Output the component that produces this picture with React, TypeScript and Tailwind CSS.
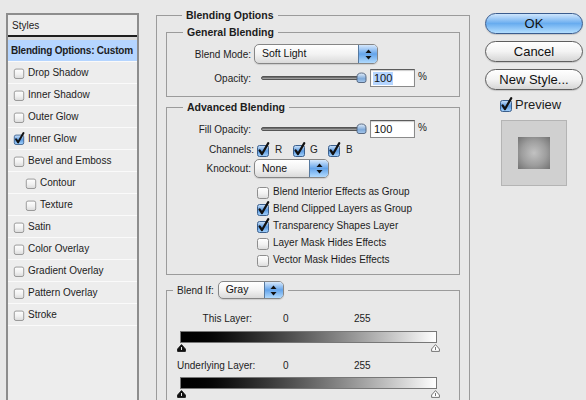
import React, { useId } from "react";

type CheckProps = { checked?: boolean; small?: boolean };

// Aqua-style checkbox; the tick pokes out over the top edge like the real thing
const AquaCheck: React.FC<CheckProps> = ({ checked = false, small = false }) => {
  const id = useId();
  const s = small ? 12 : 14;
  return (
    <svg width={s} height={s + 1} viewBox="0 0 14 15" className="block shrink-0">
      <defs>
        <linearGradient id={`${id}off`} x1="0" y1="0" x2="0" y2="1">
          <stop offset="0" stopColor="#ffffff" />
          <stop offset="0.55" stopColor="#f1f1f1" />
          <stop offset="1" stopColor="#dadada" />
        </linearGradient>
        <linearGradient id={`${id}on`} x1="0" y1="0" x2="0" y2="1">
          <stop offset="0" stopColor="#cfe4fa" />
          <stop offset="0.5" stopColor="#5c9be2" />
          <stop offset="1" stopColor="#a6d3fc" />
        </linearGradient>
      </defs>
      <rect
        x="1.5"
        y="3.5"
        width="11"
        height="11"
        rx="2"
        fill={checked ? `url(#${id}on)` : `url(#${id}off)`}
        stroke={checked ? "#3b5f8c" : "#8e8e8e"}
      />
      {checked && (
        <path
          d="M3.6 8.4 L6 12 L12.2 1.2"
          fill="none"
          stroke="#111"
          strokeWidth="2.3"
          strokeLinecap="round"
          strokeLinejoin="round"
        />
      )}
    </svg>
  );
};

const UpDown = () => (
  <svg width="7" height="11" viewBox="0 0 7 11">
    <path d="M3.5 0.5 L6.5 4 L0.5 4 Z" fill="#111" />
    <path d="M3.5 10.5 L6.5 7 L0.5 7 Z" fill="#111" />
  </svg>
);

const Popup: React.FC<{ value: string; width: string; height?: string }> = ({
  value,
  width,
  height = "h-[20px]",
}) => (
  <div
    className={`flex ${width} ${height} overflow-hidden rounded-[5px] border border-[#868686] bg-gradient-to-b from-white via-[#f3f3f3] to-[#dadada] shadow-[0_1px_1px_rgba(0,0,0,0.12)]`}
  >
    <div className="flex flex-1 items-center pl-[7px] text-[10.5px] text-[#111]">{value}</div>
    <div className="flex w-[19px] items-center justify-center border-l border-[#56799f] bg-gradient-to-b from-[#d6e8fb] via-[#64a4ea] to-[#b1dafd]">
      <UpDown />
    </div>
  </div>
);

// Horizontal slider pinned at its maximum
const Slider = () => {
  const id = useId();
  return (
    <div className="relative flex h-[14px] w-[107px] items-center">
      <div className="h-[4px] w-[101px] rounded-full border border-[#555] bg-gradient-to-b from-[#5a5a5a] to-[#b4b4b4]" />
      <svg width="11" height="12" viewBox="0 0 11 12" className="absolute right-[1px] top-[1px]">
        <defs>
          <linearGradient id={`${id}t`} x1="0" y1="0" x2="0" y2="1">
            <stop offset="0" stopColor="#e3eefa" />
            <stop offset="0.6" stopColor="#7ea9d9" />
            <stop offset="1" stopColor="#a9c9ec" />
          </linearGradient>
        </defs>
        <path
          d="M1 5 Q1 1 5.5 1 Q10 1 10 5 L10 8.5 Q10 10.5 8 10.5 L3 10.5 Q1 10.5 1 8.5 Z"
          fill={`url(#${id}t)`}
          stroke="#4d5f78"
          strokeWidth="0.9"
        />
      </svg>
    </div>
  );
};

const NumberBox: React.FC<{ selected?: boolean }> = ({ selected = false }) => (
  <div className="flex h-[18px] w-[45px] items-center border border-[#8a8a8a] border-t-[#5c5c5c] bg-white pl-[2px] shadow-[inset_0_1px_1px_rgba(0,0,0,0.2)]">
    <span className={`px-[1px] text-[11px] leading-[13px] text-[#111] ${selected ? "bg-[#b5d5ff]" : ""}`}>
      100
    </span>
  </div>
);

const Marker: React.FC<{ dark?: boolean }> = ({ dark = false }) => (
  <svg width="9" height="8" viewBox="0 0 9 8" className="block">
    <path
      d="M4.5 0.6 L8.4 5 L8.4 7.4 L0.6 7.4 L0.6 5 Z"
      fill={dark ? "#111" : "#fff"}
      stroke={dark ? "#111" : "#666"}
      strokeWidth="0.9"
      strokeLinejoin="round"
    />
    <path d="M4.5 3 L4.5 6" stroke={dark ? "#fff" : "#666"} strokeWidth="0.9" />
  </svg>
);

const GrayRamp = () => (
  <div className="flex flex-col">
    <div className="h-[12px] w-[257px] border border-[#777] bg-gradient-to-r from-black to-white" />
    <div className="ml-[-3px] mt-[1px] flex w-[263px] justify-between">
      <Marker dark />
      <Marker />
    </div>
  </div>
);

const styleRows: { label: string; checked?: boolean; indent?: boolean }[] = [
  { label: "Drop Shadow" },
  { label: "Inner Shadow" },
  { label: "Outer Glow" },
  { label: "Inner Glow", checked: true },
  { label: "Bevel and Emboss" },
  { label: "Contour", indent: true },
  { label: "Texture", indent: true },
  { label: "Satin" },
  { label: "Color Overlay" },
  { label: "Gradient Overlay" },
  { label: "Pattern Overlay" },
  { label: "Stroke" },
];

const groupOptions: { label: string; checked: boolean }[] = [
  { label: "Blend Interior Effects as Group", checked: false },
  { label: "Blend Clipped Layers as Group", checked: true },
  { label: "Transparency Shapes Layer", checked: true },
  { label: "Layer Mask Hides Effects", checked: false },
  { label: "Vector Mask Hides Effects", checked: false },
];

const AquaButton: React.FC<{ label: string; primary?: boolean }> = ({ label, primary = false }) => (
  <button
    className={`flex h-[21px] w-[98px] items-center justify-center rounded-full border text-[13px] leading-none text-[#111] shadow-[0_1px_1px_rgba(0,0,0,0.15)] ${
      primary
        ? "border-[#3a5c8e] bg-gradient-to-b from-[#cfe6fc] via-[#68acef] to-[#b3defe]"
        : "border-[#5e5e5e] bg-gradient-to-b from-white via-[#f3f3f3] to-[#d6d6d6]"
    }`}
  >
    {label}
  </button>
);

export default function App() {
  return (
    <div className="flex h-[400px] w-[586px] overflow-hidden bg-[#e8e8e8] font-['Liberation_Sans',Arial,sans-serif] text-[10px] text-[#1c1c1c]">
      {/* Styles list */}
      <div className="ml-[6px] mt-[13px] h-[420px] w-[133px] shrink-0 border-2 border-b-0 border-[#8d8d8d] bg-[#ededed]">
        <div className="flex h-[20px] items-center pl-[4px]">Styles</div>
        <div className="h-[2px] bg-[#1e1e1e]" />
        <div className="h-[3px] bg-[#d9d9d9]" />
        <div className="flex h-[22px] items-center whitespace-nowrap border-b border-[#fafafa] bg-[#b5d5ff] pl-[3px] font-bold tracking-[-0.2px]">
          Blending Options: Custom
        </div>
        {styleRows.map((row) => (
          <div
            key={row.label}
            className={`flex h-[22px] items-center gap-[3px] border-b border-[#fafafa] ${
              row.indent ? "pl-[17px]" : "pl-[5px]"
            }`}
          >
            <AquaCheck checked={row.checked} small />
            <span>{row.label}</span>
          </div>
        ))}
      </div>

      {/* Blending options */}
      <fieldset className="ml-[17px] mt-[9px] h-[420px] w-[314px] shrink-0 border border-[#9b9b9b] px-[9px] pt-[5px]">
        <legend className="ml-[16px] px-[4px] text-[10.5px] font-bold leading-[12px]">Blending Options</legend>

        <fieldset className="border border-[#9b9b9b] pb-[9px] pt-[6px]">
          <legend className="ml-[16px] px-[4px] text-[10.5px] font-bold leading-[12px]">General Blending</legend>
          <div className="flex items-center">
            <span className="w-[87px] pr-[3px] text-right">Blend Mode:</span>
            <Popup value="Soft Light" width="w-[124px]" />
          </div>
          <div className="mt-[5px] flex items-center">
            <span className="w-[87px] pr-[3px] text-right">Opacity:</span>
            <div className="ml-[7px]">
              <Slider />
            </div>
            <div className="ml-[2px]">
              <NumberBox selected />
            </div>
            <span className="ml-[3px] self-start">%</span>
          </div>
        </fieldset>

        <fieldset className="mt-[4px] border border-[#9b9b9b] pb-[6px] pt-[7px]">
          <legend className="ml-[16px] px-[4px] text-[10.5px] font-bold leading-[12px]">Advanced Blending</legend>
          <div className="flex items-center">
            <span className="w-[87px] pr-[3px] text-right">Fill Opacity:</span>
            <div className="ml-[7px]">
              <Slider />
            </div>
            <div className="ml-[2px]">
              <NumberBox />
            </div>
            <span className="ml-[3px] self-start">%</span>
          </div>
          <div className="mt-[3px] flex h-[16px] items-center">
            <span className="w-[89px] pr-[2px] text-right">Channels:</span>
            <AquaCheck checked />
            <span className="ml-[5px] w-[17px]">R</span>
            <AquaCheck checked />
            <span className="ml-[4px] w-[17px]">G</span>
            <AquaCheck checked />
            <span className="ml-[5px]">B</span>
          </div>
          <div className="mt-[2px] flex items-center">
            <span className="w-[87px] pr-[3px] text-right">Knockout:</span>
            <Popup value="None" width="w-[75px]" height="h-[19px]" />
          </div>
          <div className="mt-[5px] flex flex-col pl-[89px]">
            {groupOptions.map((opt) => (
              <div key={opt.label} className="flex h-[17px] items-center gap-[3px]">
                <AquaCheck checked={opt.checked} />
                <span>{opt.label}</span>
              </div>
            ))}
          </div>
        </fieldset>

        <fieldset className="mt-[6px] h-[200px] border border-[#9b9b9b] pt-[13px]">
          <legend className="ml-[6px] flex items-center gap-[4px] px-[4px]">
            <span>Blend If:</span>
            <Popup value="Gray" width="w-[66px]" height="h-[18px]" />
          </legend>
          <div className="flex h-[12px] items-center">
            <span className="w-[85px] text-right">This Layer:</span>
            <span className="ml-[31px] w-[71px]">0</span>
            <span>255</span>
          </div>
          <div className="ml-[13px] mt-[7px]">
            <GrayRamp />
          </div>
          <div className="mt-[7px] flex h-[12px] items-center">
            <span className="w-[85px] whitespace-nowrap pl-[10px]">Underlying Layer:</span>
            <span className="ml-[31px] w-[71px]">0</span>
            <span>255</span>
          </div>
          <div className="ml-[13px] mt-[6px]">
            <GrayRamp />
          </div>
        </fieldset>
      </fieldset>

      {/* Dialog buttons and preview */}
      <div className="ml-[15px] mt-[13px] flex w-[98px] shrink-0 flex-col">
        <AquaButton label="OK" primary />
        <div className="mt-[7px]">
          <AquaButton label="Cancel" />
        </div>
        <div className="mt-[7px]">
          <AquaButton label="New Style..." />
        </div>
        <div className="ml-[14px] mt-[5px] flex items-center gap-[2px]">
          <AquaCheck checked />
          <span className="text-[13px]">Preview</span>
        </div>
        <div className="ml-[16px] mt-[5px] flex h-[66px] w-[66px] items-center justify-center border border-[#b4b4b4] bg-[#d0d0d0]">
          <div className="h-[32px] w-[32px] bg-[radial-gradient(circle,#c2c2c2_0%,#9d9d9d_55%,#727272_100%)]" />
        </div>
      </div>
    </div>
  );
}
